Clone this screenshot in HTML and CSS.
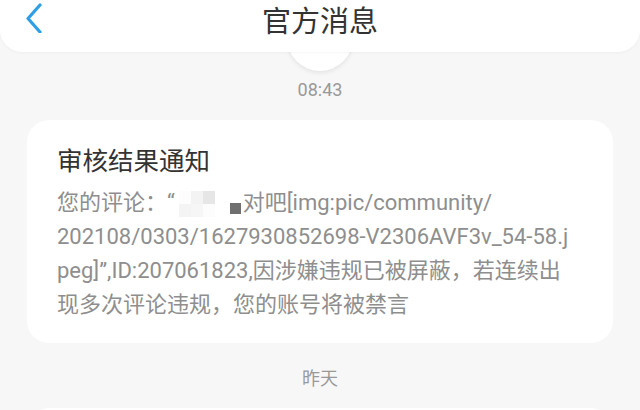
FILE: index.html
```html
<!DOCTYPE html>
<html lang="zh-CN">
<head>
    <meta charset="UTF-8">
    <meta name="viewport" content="width=device-width, initial-scale=1.0">
    <title>官方消息</title>
    <link rel="stylesheet" href="styles.css">
</head>
<body>
    <div class="header">
        <svg class="back" width="20" height="32" viewBox="0 0 20 32">
            <path d="M15 4 L3 17.5 L15 31" fill="none" stroke="#2e9fe6" stroke-width="3.2" stroke-linecap="round" stroke-linejoin="round"/>
        </svg>
        <div class="title">官方消息</div>
    </div>
    <div class="avatar"></div>

    <div class="time">08:43</div>
    <div class="card">
        <div class="card-title">审核结果通知</div>
        <div class="card-body">
            <div class="line">您的评论：“<span class="mosaic"><span class="grid"><i class="m1"></i><i class="m2"></i><i class="m3"></i><i class="m4"></i><i class="m5"></i><i class="m6"></i></span></span><span class="dot"></span>对吧[img:pic/community/</div>
            <div class="line">202108/0303/1627930852698-V2306AVF3v_54-58.j</div>
            <div class="line">peg]”,ID:207061823,因涉嫌违规已被屏蔽，若连续出</div>
            <div class="line">现多次评论违规，您的账号将被禁言</div>
        </div>
    </div>

    <div class="time day">昨天</div>
    <div class="card next"></div>
</body>
</html>
```

FILE: styles.css
```css
body {
    margin: 0;
    background: #f8f7f8;
    font-family: Roboto, "Noto Sans CJK SC", sans-serif;
    overflow: hidden;
}
.header {
    position: relative;
    z-index: 2;
    height: 52px;
    background: #fff;
    border-radius: 0 0 22px 22px;
    box-shadow: 0 1px 3px rgba(0, 0, 0, 0.04);
    display: flex;
    align-items: center;
    justify-content: center;
}
.back {
    position: absolute;
    left: 25px;
    top: 1px;
}
.title {
    font-size: 29px;
    color: #333;
    margin-top: -14px;
}
.avatar {
    position: relative;
    z-index: 1;
    width: 66px;
    height: 66px;
    margin: -47px auto 0;
    border-radius: 50%;
    background: #fff;
    box-shadow: 0 2px 4px rgba(0, 0, 0, 0.08);
}
.time {
    margin-top: 9px;
    text-align: center;
    font-size: 18px;
    line-height: 20px;
    color: #999;
}
.card {
    margin: 20px 27px 0;
    padding: 25px 30px 21px;
    background: #fff;
    border-radius: 22px;
}
.card-title {
    font-size: 25.5px;
    line-height: 32px;
    color: #333;
}
.card-body {
    margin-top: 9px;
    font-size: 22px;
    line-height: 34px;
    color: #8e8e8e;
}
.line {
    white-space: nowrap;
}
.mosaic {
    display: inline-block;
    vertical-align: 6px;
    margin-left: 4px;
    line-height: 0;
}
.grid {
    display: grid;
    grid-template-columns: 12px 12px 12px;
    grid-template-rows: 13px 13px;
}
.grid i {
    display: block;
}
.m1 { background: #fdfdfd; }
.m2 { background: #f3f3f3; }
.m3 { background: #e6e6e6; }
.m4 { background: #f4f4f4; }
.m5 { background: #f6f6f6; }
.m6 { background: #fcfcfc; }
.dot {
    display: inline-block;
    width: 11px;
    height: 11px;
    background: #6f6f6f;
    margin: 0 2px 0 15px;
    vertical-align: -4px;
}
.day {
    margin-top: 26px;
}
.next {
    margin-top: 19px;
    height: 60px;
    padding: 0;
}
```
